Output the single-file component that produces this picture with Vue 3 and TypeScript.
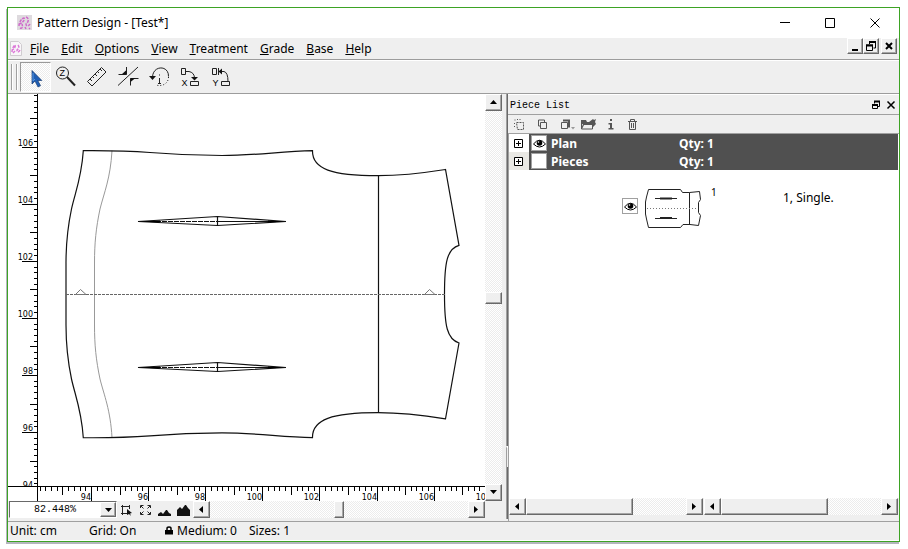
<script setup lang="ts">
import { computed, onBeforeUnmount, onMounted, ref } from 'vue'

interface Tick {
  pos: number
  value: number
  kind: 'major' | 'unit' | 'minor'
}

const UNIT = 28.55

function makeTicks(origin: number, originValue: number, length: number, sign: 1 | -1): Tick[] {
  const ticks: Tick[] = []
  for (let i = -400; i <= 400; i++) {
    const pos = Math.round(origin + (sign * i * UNIT) / 5)
    const kind = i % 10 === 0 ? 'major' : i % 5 === 0 ? 'unit' : 'minor'
    if (pos >= 0 && pos <= length + 7) ticks.push({ pos, value: originValue + i / 5, kind })
  }
  return ticks
}

const drawing = ref<SVGSVGElement | null>(null)
const drawingSize = ref({ width: 0, height: 0 })
let observer: ResizeObserver | undefined

function measure() {
  if (!drawing.value) return
  const { width, height } = drawing.value.getBoundingClientRect()
  drawingSize.value = { width, height }
}

onMounted(() => {
  measure()
  observer = new ResizeObserver(measure)
  if (drawing.value) observer.observe(drawing.value)
})
onBeforeUnmount(() => observer?.disconnect())

const verticalTicks = computed(() => makeTicks(281, 98, drawingSize.value.height, -1))
const horizontalTicks = computed(() => makeTicks(53, 94, drawingSize.value.width, 1))
const verticalStart = { major: 14, unit: 22, minor: 26 }
const horizontalEnd = { major: 15, unit: 8, minor: 4 }

const menus = ['File', 'Edit', 'Options', 'View', 'Treatment', 'Grade', 'Base', 'Help']
const groups = [
  { name: 'Plan', qty: 1, visible: true },
  { name: 'Pieces', qty: 1, visible: false },
]
const zoomLevel = ref('82.448%')
const outline =
  'M83.3 150.7 C110 150.5 130 151 150 152.5 C180 155 200 155.5 222 155.5 C255 155.5 280 151.5 312.5 150.7 C312 169 332 175.7 378 175.7 C400 175.7 420 173.5 445.5 169.5 L459 245.4 C447 249 444.5 262 444.5 294.2 C444.5 326 447 339 459 343 L445.5 418.9 C420 414.8 400 412.7 378 412.7 C332 412.7 312 419.4 312.5 437.7 C280 436.8 255 432.9 222 432.9 C200 432.9 180 433.4 150 435.9 C130 437.4 110 437.9 83.3 437.7 C81.5 410 75 395 71.5 379 C67.5 360 66 345 66 325 L66 263 C66 243 67.5 228 71.5 209 C75 193 81.5 178 83.3 150.7 Z'
</script>

<template>
  <div class="window">
    <header class="titlebar">
      <svg class="app-icon" width="16" height="16" viewBox="0 0 16 16" aria-hidden="true">
        <rect width="15" height="15" fill="#dedade" />
        <path d="M2 11 C2 7 5 3 7 3 C8 5 6 7 3 9 M3 13 C5 14 6 12 5 9 M9 2 C12 3 12 7 9 9 C9 12 12 11 13 9 M8 12 L9 14 M12 13 L13 14" fill="none" stroke="#cf6acb" stroke-width="1.5" stroke-dasharray="3 1" />
      </svg>
      <h1>Pattern Design - [Test*]</h1>
      <div class="window-buttons">
        <button aria-label="Minimize"><svg width="12" height="12"><path d="M1 5.500h10" /></svg></button>
        <button aria-label="Maximize"><svg width="12" height="12"><path d="M1.500 1.500h9v9h-9z" /></svg></button>
        <button aria-label="Close"><svg width="12" height="12"><path d="M1.500 1.500l9 9M10.500 1.500l-9 9" /></svg></button>
      </div>
    </header>

    <nav class="menubar">
      <svg class="doc-icon" width="12" height="15" viewBox="0 0 12 15" aria-hidden="true">
        <path d="M.5 .5h8l3 3v11h-11z" fill="#f8f6f8" stroke="#d0ccd0" />
        <path d="M2 11 C2 8 4 4 5 4 C6 6 4 8 2 9 M3 12 L5 10 M8 4 C10 6 8 8 7 9 C7 12 9 11 10 9" fill="none" stroke="#dc78d8" stroke-width="1.500" stroke-dasharray="3 1" />
      </svg>
      <a v-for="menu in menus" :key="menu" href="#"><u>{{ menu[0] }}</u>{{ menu.slice(1) }}</a>
      <div class="document-buttons">
        <button class="raised" aria-label="Minimize document"><svg width="12" height="12"><path d="M3 10h6" stroke-width="2" /></svg></button>
        <button class="raised" aria-label="Restore document"><svg width="12" height="12"><path d="M4 2h7M4.500 1v3M10.500 2v6h-2M1 5h7M1.500 5v5.500h6v-5.500" /><path d="M4 2h7M1 5.500h7" stroke-width="2" /></svg></button>
        <button class="raised close" aria-label="Close document"><svg width="12" height="12"><path d="M3 3l6 6M9 3l-6 6" stroke-width="2" /></svg></button>
      </div>
    </nav>

    <div class="toolbar" role="toolbar" aria-label="Tools">
      <span class="handle"></span>
      <button class="tool pressed" aria-label="Select">
        <svg viewBox="0 0 31 30"><path d="M12 8.500v13.500l3-3 3 6 2.500-1.300-2.700-5.200h4z" fill="#1f5eb5" stroke="#173b70" stroke-width=".7" /><path d="M13 11v8l2-2" fill="none" stroke="#5b98e0" /></svg>
      </button>
      <button class="tool" aria-label="Zoom">
        <svg viewBox="0 0 31 30"><circle cx="11.500" cy="11" r="6" class="line" /><text x="8.500" y="14" class="letter">Z</text><path d="M16 15l8 8.500" class="line heavy" /></svg>
      </button>
      <button class="tool" aria-label="Measure">
        <svg viewBox="0 0 31 30"><path d="M5.500 19.500l14-14 4.500 4.500-14 14zM8 17l2 2M10.500 14.500l1.500 1.500M13 12l2 2M15.500 9.500l1.500 1.500M18 7l2 2" class="line" /></svg>
      </button>
      <button class="tool" aria-label="Axes">
        <svg viewBox="0 0 31 30"><path d="M5 23.500l20-18.500M13.500 5v7.500h-8M17.500 23.500v-7h8" class="line" /><path d="M13.500 8v4.500h-5zM17.500 20v-4h5z" class="solid" /></svg>
      </button>
      <button class="tool" aria-label="Rotate">
        <svg viewBox="0 0 31 30"><path d="M8.500 15C9 3 25 3 24.500 14.500" class="line" /><path d="M24.500 15C24.500 21 19 25 12 23" class="line dotted" /><path d="M15.500 12.500v1M15.500 16v5M14 21.500h3" class="line" /><path d="M5 14h7l-3.500 4z" class="solid" /></svg>
      </button>
      <button class="tool" aria-label="Move along X">
        <svg viewBox="0 0 31 30"><path d="M6.500 6.500h4v6h-4zM11 9.500h3q5 1 5.500 6M15.500 19.500h8v4h-8z" class="line" /><path d="M16 15h7l-3.500 3.500z" class="solid" /><text x="6.500" y="24" class="letter">X</text></svg>
      </button>
      <button class="tool" aria-label="Move along Y">
        <svg viewBox="0 0 31 30"><path d="M6.500 6.500h4v6h-4zM12.500 6v7M15 9.500h3q4 1 4 10M15.500 19.500h8v4h-8z" class="line" /><path d="M12.500 9.500l3.500-3v6z" class="solid" /><text x="6.500" y="24" class="letter">Y</text></svg>
      </button>
    </div>

    <main class="workspace">
      <section class="editor">
        <div class="canvas">
          <svg class="vertical-ruler" aria-hidden="true">
            <g v-for="tick in verticalTicks" :key="tick.value">
              <rect :x="verticalStart[tick.kind]" :y="tick.pos" :width="30 - verticalStart[tick.kind]" height="1" />
              <text v-if="tick.kind === 'major'" x="25" :y="tick.pos - 1" text-anchor="end">{{ tick.value }}</text>
            </g>
          </svg>
          <svg ref="drawing" class="drawing" role="img" aria-label="Pattern piece">
            <g transform="translate(-38 -94)">
              <path d="M112 150.700C110.500 178 104 193 100 209C96 228 94.500 243 94.500 263V325C94.500 345 96 360 100 379C104 395 110.500 410 112 437.700" class="inner" />
              <path :d="outline" class="edge" />
              <path d="M378.500 175.500V413" class="edge" />
              <path d="M66 294.500H445" class="axis" />
              <path d="M75.500 294.500l5-5 5.500 5zM424.500 294.500l5-5 5.500 5z" class="notch" />
              <g v-for="y in [221, 367]" :key="y" :transform="`translate(0 ${y})`">
                <path d="M138 .5L217.500 -4.500L286 .5L217.500 4.500ZM217.500 -4.500V4.500M217 .5H286" class="edge" />
                <path d="M138 .5H217" class="edge dart" />
                <path d="M138 .5l22 -1v2zM286 .5l-18 -1v2z" />
              </g>
            </g>
          </svg>
          <span class="corner"></span>
          <svg class="horizontal-ruler" aria-hidden="true">
            <g v-for="tick in horizontalTicks" :key="tick.value">
              <rect :x="tick.pos" y="0" width="1" :height="horizontalEnd[tick.kind]" />
              <text v-if="tick.kind === 'major'" :x="tick.pos" y="13" text-anchor="end">{{ tick.value }}</text>
            </g>
          </svg>
        </div>
        <div class="scroll vertical">
          <button class="raised" aria-label="Scroll up"><svg width="7" height="5"><path d="M0 4h7L3.500 0z" /></svg></button>
          <span class="before"></span><span class="thumb raised"></span><span class="after"></span>
          <button class="raised" aria-label="Scroll down"><svg width="7" height="5"><path d="M0 0h7L3.500 4z" /></svg></button>
        </div>
        <div class="view-controls">
          <label class="zoom">
            <select v-model="zoomLevel" aria-label="Zoom level">
              <option>82.448%</option>
              <option>100%</option>
            </select>
            <span class="drop raised"><svg width="7" height="4"><path d="M0 0h7L3.500 4z" /></svg></span>
          </label>
          <button class="mini" aria-label="Zoom to area"><svg width="13" height="12"><path d="M2.500 1v10M1 2.500h9M9.500 1v4M1 9.500h7" class="line" /><path d="M7 5l5 4-2 .5 1 2.500-2-2-2 1z" class="solid" /></svg></button>
          <button class="mini" aria-label="Fit all"><svg width="13" height="12"><path d="M1.500 4v-2.500h3M8.500 1.500h3v2.500M1.500 8v2.500h3M8.500 10.500h3v-2.500M2 2l2.500 2.500M11 2l-2.500 2.500M2 10l2.500-2.500M11 10l-2.500-2.500" class="line" /></svg></button>
          <button class="mini" aria-label="Small detail"><svg width="13" height="12"><path d="M0 12v-2l3-2 2 2 3-4h1l2 3 2 1v2z" class="solid" /></svg></button>
          <button class="mini" aria-label="Large detail"><svg width="13" height="12"><path d="M0 12v-6l3-3 2 2 3-4h1l2 3 2 2v6z" class="solid" /></svg></button>
          <div class="scroll horizontal">
            <button class="raised" aria-label="Scroll left"><svg width="5" height="7"><path d="M4 0v7L0 3.500z" /></svg></button>
            <span class="before"></span><span class="thumb raised"></span><span class="after"></span>
            <button class="raised" aria-label="Scroll right"><svg width="5" height="7"><path d="M0 0v7L4 3.500z" /></svg></button>
          </div>
        </div>
      </section>

      <div class="splitter"><span class="upper"></span><span class="grip"></span><span class="lower"></span></div>

      <aside class="dock">
        <header class="dock-title">
          <h2>Piece List</h2>
          <button aria-label="Float panel"><svg width="10" height="10"><path d="M3 1.500h6M1 5h5" stroke-width="2" /><path d="M3.500 1v2.500M8.500 1v5.500h-1.500M1.500 4v4.500h5v-4.500" /></svg></button>
          <button aria-label="Close panel"><svg width="10" height="10"><path d="M1.500 1.500l7 7M8.500 1.500l-7 7" stroke-width="1.500" /></svg></button>
        </header>
        <div class="dock-tools" role="toolbar" aria-label="Piece tools">
          <button aria-label="New piece"><svg width="11" height="11"><path d="M2.500 3.500h7v7h-6zM.5 1h1M3 .5h1M5.500 .5h1M.5 4v1M.5 7v1" stroke-dasharray="2 1" /></svg></button>
          <button aria-label="Copy piece"><svg width="11" height="11"><path d="M3.500 3.500h6v6h-6zM7.500 3v-2h-6v6h2" /></svg></button>
          <button aria-label="Arrange pieces"><svg width="16" height="11"><path d="M1.500 3.500h6v6h-6z" /><path d="M3 1.500h6v7" stroke-width="2" /><path d="M11 8h4l-2 2.500z" class="light" /></svg></button>
          <button class="open" aria-label="Open piece"><svg width="17" height="11"><path d="M.5 2v8h11v-3M2.500 5.500h9" /><path d="M0 1h5l1 2h4v2h-10zM2 5h13l-3 3h-1v-2h-8l-2 4h-1zM8 3l4-3 1 1 2-1-1 3 1 2h-6z" class="fill" /></svg></button>
          <button aria-label="Piece information"><svg width="9" height="11"><path d="M4 0h2v2h-2zM2.500 4h3.500v5h1.500v1.500h-5v-1.500h1.500v-3.500h-1.500z" class="fill" /></svg></button>
          <button aria-label="Delete piece"><svg width="11" height="11"><path d="M1 2.500h9M3.500 2v-1.500h4v1.500M2.500 3v7.500h6v-7.500M4.500 4v5M6.500 4v5" /></svg></button>
        </div>
        <ul class="tree">
          <li v-for="group in groups" :key="group.name" class="group">
            <span class="expander"><button aria-label="Expand"><svg width="9" height="9"><path d="M.5 .5h8v8h-8zM2 4.500h5M4.500 2v5" /></svg></button></span>
            <button class="eye" aria-label="Toggle visibility">
              <svg v-if="group.visible" width="13" height="9" viewBox="0 0 13 9"><path d="M.5 5Q6.500 -2.500 12.500 5Q6.500 11 .5 5Z" fill="#fff" stroke="#000" /><circle cx="6.500" cy="4" r="2.800" /><circle cx="5.500" cy="3" r=".8" fill="#fff" /></svg>
            </button>
            <strong class="name">{{ group.name }}</strong>
            <strong class="qty">Qty: {{ group.qty }}</strong>
          </li>
          <li class="piece">
            <button class="eye" aria-label="Toggle piece visibility">
              <svg width="13" height="9" viewBox="0 0 13 9"><path d="M.5 5Q6.500 -2.500 12.500 5Q6.500 11 .5 5Z" fill="#fff" stroke="#000" /><circle cx="6.500" cy="4" r="2.800" /><circle cx="5.500" cy="3" r=".8" fill="#fff" /></svg>
            </button>
            <svg class="thumbnail" width="57" height="39" viewBox="0 0 57 39" aria-hidden="true">
              <path d="M3.500 .5H35.500L37.500 3.500H44.500L54.500 2.500L55.500 10.500L53.500 13.500V23.500L55.500 26.500L53.500 36.500L45 35.500H38L35.500 38.500H3.500L1.500 30L.5 25V13L1.500 8ZM44.500 3.500V35.500M10 9.500H32M10 29.500H32" class="line" />
              <path d="M15 9.500H27M15 29H27" class="line heavy" />
              <path d="M2 19.500H53" class="line dotted faint" />
            </svg>
            <span class="number">1</span>
            <span class="description">1, Single.</span>
          </li>
        </ul>
        <div class="dock-scrolls">
          <div v-for="side in ['names', 'details']" :key="side" class="scroll horizontal">
            <button class="raised" :aria-label="`Scroll ${side} left`"><svg width="5" height="7"><path d="M4 0v7L0 3.500z" /></svg></button>
            <span class="thumb raised"></span><span class="after"></span>
            <button class="raised" :aria-label="`Scroll ${side} right`"><svg width="5" height="7"><path d="M0 0v7L4 3.500z" /></svg></button>
          </div>
        </div>
      </aside>
    </main>

    <footer class="statusbar">
      <span class="unit-label">Unit: cm</span>
      <span class="grid-label">Grid: On</span>
      <svg width="8" height="9" aria-hidden="true"><path d="M0 4h8v4.500h-8z" /><path d="M2 4v-1.500q0-1.500 2-1.500t2 1.500v1.500" fill="none" stroke="#000" stroke-width="1.500" /></svg>
      <span class="medium-label">Medium: 0</span>
      <span>Sizes: 1</span>
    </footer>
  </div>
</template>

<style>
body {
  margin: 0;
  background: #fff;
}
</style>

<style scoped>
* {
  box-sizing: border-box;
}
.window {
  display: flex;
  flex-direction: column;
  min-height: calc(100vh - 14px);
  margin: 7px 8px 7px 7px;
  border: 1px solid #3da324;
  box-shadow: -1px 2px 0 #b4b5be;
  background: #efefef;
  color: #000;
  font: 12px/16px "Noto Sans", "Open Sans", sans-serif;
}
button {
  display: flex;
  align-items: center;
  justify-content: center;
  flex: none;
  padding: 0;
  border: 0;
  background: none;
}
h1,
h2 {
  margin: 0;
  font-weight: 400;
}
svg {
  display: block;
  flex: none;
}
.titlebar {
  display: flex;
  align-items: center;
  height: 30px;
  padding: 0 2px 0 9px;
  background: #fff;
}
h1 {
  margin-left: 4px;
  font-size: 12px;
}
.window-buttons {
  display: flex;
  margin-left: auto;
}
.window-buttons button {
  width: 45px;
  height: 28px;
}
.window-buttons path,
.document-buttons path,
.dock-title path {
  fill: none;
  stroke: #000;
}
.menubar {
  display: flex;
  align-items: center;
  gap: 12px;
  height: 22px;
  padding: 0 2px;
  border-bottom: 1px solid #9c9c9c;
}
.menubar a {
  color: #000;
  text-decoration: none;
}
.doc-icon {
  margin-right: -4px;
}
.document-buttons {
  display: flex;
  align-self: flex-start;
  margin-left: auto;
}
.document-buttons button {
  width: 16px;
  height: 16px;
}
.document-buttons .close {
  margin-left: 2px;
}
.raised {
  border: 1px solid;
  border-color: #fff #696969 #696969 #fff;
  background: #efefef;
  box-shadow: inset -1px -1px 0 #a6a6a6;
}
.toolbar {
  display: flex;
  align-items: center;
  height: 34px;
  border-top: 1px solid #fff;
  border-bottom: 1px solid #9c9c9c;
}
.handle {
  width: 6px;
  height: 26px;
  margin: 0 3px;
  border: solid #a0a0a0;
  border-width: 0 1px;
  box-shadow: inset 1px 0 0 #fff, 1px 0 0 #fff;
}
.tool {
  width: 31px;
  height: 30px;
}
.tool svg {
  width: 31px;
  height: 30px;
}
.pressed {
  border: 1px solid;
  border-color: #999 #fff #fff #999;
  background: repeating-conic-gradient(#fff 0 25%, #ececec 0 50%) 0 0 / 2px 2px;
}
.pressed svg {
  margin: -1px;
}
.line {
  fill: none;
  stroke: #222;
}
.heavy {
  stroke-width: 2;
}
.dotted {
  stroke-dasharray: 1 2;
}
.faint {
  stroke: #777;
}
.solid {
  fill: #111;
}
.letter {
  font: 9px "Liberation Sans", sans-serif;
}
.workspace {
  display: flex;
  flex: 1;
  min-height: 300px;
}
.editor {
  display: grid;
  grid-template: minmax(0, 1fr) 17px / minmax(0, 1fr) 17px;
  flex: 494 1 0;
  min-width: 0;
  padding-bottom: 3px;
}
.canvas {
  display: grid;
  grid-template: minmax(0, 1fr) 15px / 30px minmax(0, 1fr);
  background: #fff;
}
.canvas svg {
  width: 100%;
  height: 100%;
  overflow: hidden;
}
.canvas text {
  font: 8px "DejaVu Sans", sans-serif;
}
.canvas rect {
  shape-rendering: crispEdges;
}
.vertical-ruler {
  border-right: 1px solid #000;
}
.horizontal-ruler {
  border-top: 1px solid #000;
}
.corner {
  border: solid #000;
  border-width: 1px 1px 0 0;
}
.edge {
  fill: none;
  stroke: #111;
  stroke-width: 1.2;
}
.dart {
  stroke-dasharray: 5 1;
}
.inner {
  fill: none;
  stroke: #999;
}
.notch {
  fill: none;
  stroke: #777;
}
.axis {
  fill: none;
  stroke: #666;
  stroke-dasharray: 3 1;
}
.scroll {
  display: flex;
  background: repeating-conic-gradient(#fff 0 25%, #ececec 0 50%) 0 0 / 2px 2px;
}
.vertical {
  flex-direction: column;
}
.horizontal {
  flex: 1;
}
.scroll button {
  width: 17px;
  height: 17px;
}
.horizontal button svg {
  margin-right: 1px;
}
.vertical button svg {
  margin-right: 1px;
}
.before,
.after {
  flex: 1;
}
.vertical .thumb {
  height: 12px;
}
.horizontal .thumb {
  width: 10px;
}
.view-controls {
  display: flex;
  min-width: 0;
}
.zoom {
  position: relative;
  flex: none;
  width: 108px;
  margin-left: 1px;
}
.zoom select {
  display: block;
  width: 100%;
  height: 17px;
  padding: 1px 18px 0 24px;
  border: 1px solid;
  border-color: #696969 #fff #fff #696969;
  border-radius: 0;
  background: #fff;
  color: #000;
  font: 10px/14px "Liberation Mono", monospace;
  appearance: none;
}
.drop {
  position: absolute;
  top: 1px;
  right: 1px;
  display: flex;
  align-items: center;
  justify-content: center;
  width: 16px;
  height: 15px;
  pointer-events: none;
}
.mini {
  width: 19px;
  height: 17px;
}
.splitter {
  display: flex;
  flex-direction: column;
  width: 6px;
  padding-left: 4px;
  padding-bottom: 2px;
}
.upper,
.lower {
  flex: 350;
  border-left: 1px solid #a0a0a0;
  border-right: 1px solid #696969;
}
.lower {
  flex: 52;
}
.grip {
  height: 21px;
  border-top: 2px solid #fff;
  border-left: 1px solid #a0a0a0;
}
.dock {
  display: flex;
  flex-direction: column;
  flex: 391 1 0;
  min-width: 0;
}
.dock-title {
  display: flex;
  align-items: center;
  gap: 5px;
  height: 21px;
  padding: 0 3px 0 2px;
  border-top: 1px solid #fff;
  border-bottom: 1px solid #a0a0a0;
}
h2 {
  margin-right: auto;
  font: 10px/18px "Liberation Mono", monospace;
  padding-top: 2px;
}
.dock-tools {
  display: flex;
  align-items: center;
  gap: 12px;
  height: 19px;
  padding-left: 6px;
  border-bottom: 1px solid #a0a0a0;
}
.dock-tools button:nth-child(3) {
  margin-right: -7px;
}
.dock-tools .open {
  margin-right: -4px;
}
.dock-tools path {
  fill: none;
  stroke: #555;
}
.dock-tools .fill {
  fill: #555;
  stroke: none;
}
.dock-tools .light {
  fill: #999;
  stroke: none;
}
.tree {
  flex: 1;
  margin: 0;
  padding: 0 1px 0 0;
  border-left: 1px solid #a0a0a0;
  background: #fff;
  list-style: none;
}
.group {
  display: flex;
  align-items: center;
  height: 18px;
  background: #505050;
  color: #fff;
}
.group strong {
  padding-top: 1px;
}
.expander {
  display: flex;
  align-items: center;
  align-self: stretch;
  width: 20px;
  padding-left: 5px;
  background: #fff;
}
.group:nth-child(2) .expander {
  background: #e9e8e4;
}
.expander path {
  fill: #fff;
  stroke: #000;
}
.eye {
  width: 16px;
  height: 16px;
  border: 1px solid #a0a0a0;
  background: #fff;
}
.group .eye {
  margin-left: 2px;
}
.name {
  width: 128px;
  margin-left: 4px;
}
.piece {
  display: flex;
  align-items: flex-start;
  padding: 19px 0 0 113px;
}
.piece .eye {
  margin-top: 9px;
}
.thumbnail {
  margin-left: 7px;
}
.number {
  width: 72px;
  margin-left: 9px;
  font-size: 10px;
  line-height: 6px;
}
.piece .description {
  margin-top: 1px;
}
.dock-scrolls {
  display: flex;
  gap: 1px;
  height: 23px;
  padding: 0 1px 6px 1px;
  box-shadow: inset 1px 0 0 #a0a0a0;
}
.dock-scrolls .thumb {
  flex: 106;
}
.dock-scrolls .after {
  flex: 53;
}
.statusbar {
  display: flex;
  align-items: center;
  height: 20px;
  padding: 0 2px 2px;
  border-top: 1px solid #a0a0a0;
  box-shadow: inset 0 -1px 0 #fff;
}
.unit-label {
  width: 79px;
}
.grid-label {
  width: 76px;
}
.medium-label {
  width: 72px;
  margin-left: 4px;
}
</style>
